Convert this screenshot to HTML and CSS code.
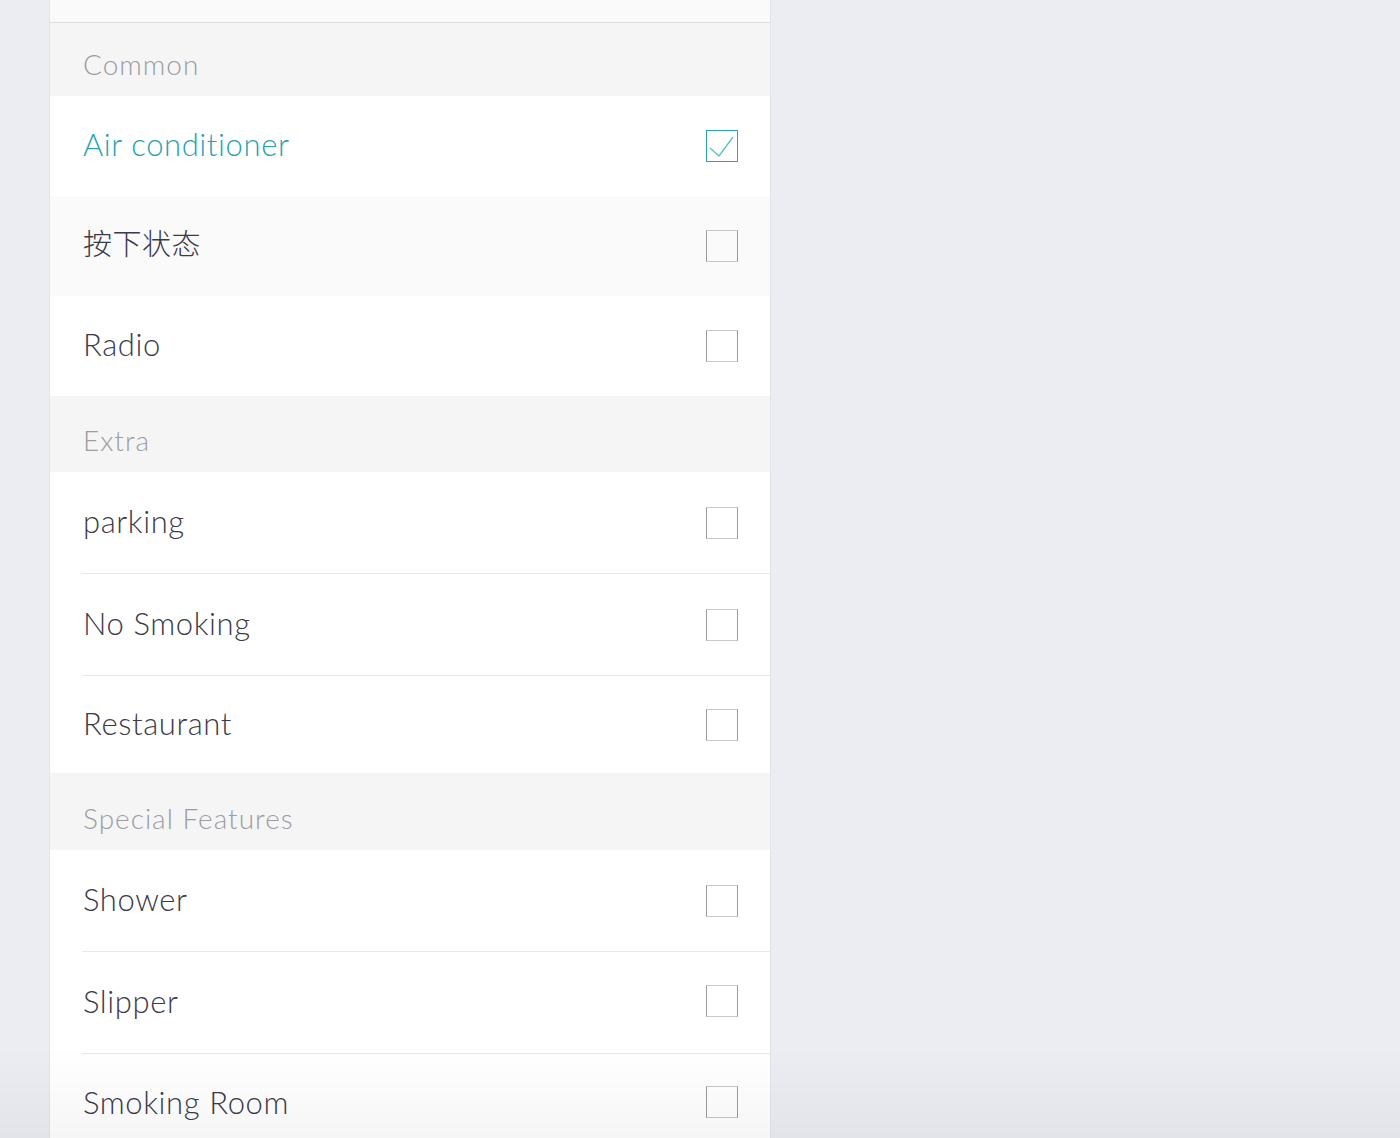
FILE: index.html
```html
<!DOCTYPE html>
<html>
<head>
<meta charset="utf-8">
<link rel="stylesheet" href="styles.css">
</head>
<body>
<div class="panel">
  <div class="top"></div>
  <div class="section section-first">Common</div>
  <div class="row"><span class="label label-active">Air conditioner</span><span class="check check-on"><svg width="30" height="30" viewBox="0 0 30 30"><path d="M3 17 L12 25 L26 6" fill="none" stroke="#5bbfca" stroke-width="1.3"/></svg></span></div>
  <div class="row row-pressed"><span class="label label-cjk">按下状态</span><span class="check"></span></div>
  <div class="row"><span class="label">Radio</span><span class="check"></span></div>
  <div class="section">Extra</div>
  <div class="row row-div"><span class="label">parking</span><span class="check"></span></div>
  <div class="row row-div"><span class="label">No Smoking</span><span class="check"></span></div>
  <div class="row row-short"><span class="label">Restaurant</span><span class="check"></span></div>
  <div class="section section-tall">Special Features</div>
  <div class="row row-div"><span class="label">Shower</span><span class="check"></span></div>
  <div class="row row-div row-up"><span class="label">Slipper</span><span class="check"></span></div>
  <div class="row row-up"><span class="label">Smoking Room</span><span class="check"></span></div>
</div>
<div class="fade"></div>
</body>
</html>
```
FILE: styles.css
```css
html, body {
  margin: 0;
  padding: 0;
  height: 100%;
  overflow: hidden;
}
body {
  background: #ecedf2;
  font-family: "Lato", "Noto Sans CJK SC", sans-serif;
  color: #3b3a48;
}
.panel {
  margin-left: 49px;
  width: 720px;
  background: #fff;
  border-left: 1px solid #dfe5ef;
  border-right: 1px solid #dfe5ef;
}
.top {
  height: 22px;
  background: #fafafa;
  border-bottom: 1px solid #dddddd;
}
.section {
  height: 76px;
  box-sizing: border-box;
  background: #f5f5f5;
  color: #9c9ca2;
  font-size: 28px;
  font-weight: 300;
  padding-left: 33px;
  display: flex;
  align-items: flex-end;
  padding-bottom: 17px;
  line-height: 30px;
  letter-spacing: 1px;
}
.section-first { height: 73px; }
.section-tall { height: 77px; }
.row {
  height: 100px;
  display: flex;
  align-items: center;
  justify-content: space-between;
  padding-left: 33px;
  padding-right: 32px;
  background: #fff;
  position: relative;
}
.row-pressed { background: #fafafa; }
.row-short { height: 97px; }
.row-div { height: 101px; margin-bottom: 1px; }
.row-up { padding-bottom: 4px; box-sizing: border-box; }
.row-up.row-div { height: 101px; }
.row-up:not(.row-div) { height: 100px; }
.row-div::after {
  content: "";
  position: absolute;
  left: 32px;
  right: 0;
  bottom: -1px;
  height: 1px;
  background: #e8e8ea;
}
.label {
  font-size: 31px;
  font-weight: 300;
  letter-spacing: 0.6px;
  line-height: 36px;
  margin-bottom: 4px;
}
.row-up .label { margin-bottom: 0; }
.label-cjk {
  font-size: 29px;
  letter-spacing: 0.5px;
}
.label-active { color: #27a3b0; }
.check {
  width: 30px;
  height: 30px;
  border: 1px solid #9a9aa0;
  border-top-color: #c8c8cc;
  border-bottom-color: #c8c8cc;
  display: block;
  position: relative;
}
.check svg { display: block; }
.check-on {
  border-color: #27a3b0;
}
.fade {
  position: fixed;
  left: 0;
  right: 0;
  bottom: 0;
  height: 90px;
  background: linear-gradient(to bottom, rgba(0,0,0,0), rgba(0,0,0,0.035));
  pointer-events: none;
}
```
